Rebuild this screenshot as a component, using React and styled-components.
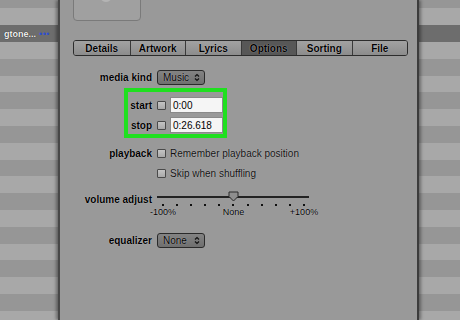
import styled, { createGlobalStyle } from 'styled-components';

const GlobalStyle = createGlobalStyle`
  html, body {
    margin: 0;
    padding: 0;
    background: #999;
  }
  body {
    font-family: "Liberation Sans", Arial, sans-serif;
  }
`;

const Screen = styled.div`
  width: 460px;
  height: 320px;
  overflow: hidden;
  display: grid;
  grid-template-columns: 58px 1fr 41px;
  background: #999;
`;

const ListStrip = styled.div`
  display: flex;
  flex-direction: column;
  margin-top: -8.4px;
  overflow: hidden;
`;

const ListRow = styled.div`
  flex: 0 0 16.8px;
  display: flex;
  align-items: center;
  justify-content: flex-end;
  gap: 3px;
  padding-right: 8px;
  overflow: hidden;
  white-space: nowrap;
  background: ${({ $selected, $odd }) =>
    $selected ? '#6d6d6d' : $odd ? '#a8a8a8' : '#969696'};
`;

const RowText = styled.span`
  font-size: 9px;
  font-weight: bold;
  color: #f2f2f2;
  text-shadow: 0 0 1px #000;
`;

const Dots = styled.span`
  font-size: 9px;
  letter-spacing: 0.5px;
  color: #2f4fd0;
`;

const Dialog = styled.div`
  background: #999;
  border-left: 2px solid #474747;
  border-right: 2px solid #3c3c3c;
  box-shadow: -2px 0 3px rgba(0, 0, 0, 0.35), 2px 0 3px rgba(0, 0, 0, 0.35);
  display: flex;
  flex-direction: column;
  align-items: flex-start;
  padding-left: 13px;
  position: relative;
  z-index: 1;
`;

const Artwork = styled.div`
  margin-top: -10px;
  width: 66px;
  height: 29px;
  border: 1px solid #7a7a7a;
  border-radius: 4px;
  background: #a0a0a0;
  display: flex;
  justify-content: center;
`;

const TabBar = styled.div`
  margin-top: 19px;
  width: 333px;
  height: 14px;
  display: grid;
  grid-template-columns: repeat(6, 1fr);
  border: 1px solid #2c2c2c;
  border-radius: 3px;
  overflow: hidden;
`;

const Tab = styled.div`
  display: flex;
  align-items: center;
  justify-content: center;
  font-size: 10px;
  font-weight: bold;
  color: #000;
  text-shadow: 0 0 1px rgba(255, 255, 255, 0.7);
  background: ${({ $active }) =>
    $active ? '#575757' : 'linear-gradient(#a2a2a2, #8c8c8c)'};
  & + & {
    border-left: 1px solid #3a3a3a;
  }
`;

const Form = styled.div`
  display: flex;
  flex-direction: column;
  margin-left: -13px;
  margin-top: 14px;
`;

const Row = styled.div`
  display: grid;
  grid-template-columns: ${({ $label }) => $label}px auto;
  column-gap: 5px;
  align-items: ${({ $top }) => ($top ? 'start' : 'center')};
  height: ${({ $h }) => $h}px;
  margin-top: ${({ $mt }) => $mt || 0}px;
`;

const Label = styled.div`
  text-align: right;
  font-size: 10px;
  font-weight: bold;
  color: #000;
  white-space: nowrap;
  text-shadow: 0 0 1px rgba(255, 255, 255, 0.6);
  margin-top: ${({ $mt }) => $mt || 0}px;
`;

const Control = styled.div`
  display: flex;
  align-items: center;
  gap: 4px;
  font-size: 10px;
  color: #111;
  white-space: nowrap;
  text-shadow: 0 0 1px rgba(255, 255, 255, 0.5);
`;

const Select = styled.div`
  width: 48px;
  height: 15px;
  box-sizing: border-box;
  border: 1px solid #2a2a2a;
  border-radius: 3px;
  background: linear-gradient(#838383, #6f6f6f);
  display: flex;
  align-items: center;
  justify-content: space-between;
  padding: 0 4px 0 5px;
  font-size: 10px;
  color: #000;
  text-shadow: 0 0 1px rgba(255, 255, 255, 0.6);
`;

const Highlight = styled.div`
  margin-top: 3px;
  margin-left: 64px;
  width: 103px;
  height: 50px;
  box-sizing: border-box;
  border: 4px solid #1fe01f;
  padding: 5px 2px 1px 0;
  display: flex;
  flex-direction: column;
  gap: 4px;
`;

const Check = styled.span`
  width: 9px;
  height: 9px;
  box-sizing: border-box;
  border: 1px solid #4a4a4a;
  border-radius: 1px;
  background: linear-gradient(#c4c4c4, #a9a9a9);
  flex: 0 0 auto;
`;

const TimeInput = styled.div`
  width: 53px;
  height: 16px;
  box-sizing: border-box;
  border: 1px solid #8a8a8a;
  background: #f5f5f5;
  padding-left: 2px;
  display: flex;
  align-items: center;
  font-size: 10px;
  color: #000;
`;

const Slider = styled.div`
  width: 152px;
  display: flex;
  flex-direction: column;
`;

const TrackWrap = styled.div`
  height: 11px;
  position: relative;
`;

const Track = styled.div`
  position: absolute;
  left: 0;
  right: 0;
  top: 5px;
  height: 2px;
  background: #222;
`;

const Thumb = styled.svg`
  position: absolute;
  left: 71px;
  top: 0;
`;

const Ticks = styled.div`
  display: flex;
  justify-content: space-between;
  padding: 0 4px 0 5px;
  margin-top: 2px;
`;

const Tick = styled.span`
  width: 2px;
  height: 2px;
  background: #111;
`;

const ScaleLabels = styled.div`
  display: flex;
  justify-content: space-between;
  padding: 0 4px 0 5px;
  margin-top: 1px;
  height: 10px;
`;

const ScaleMark = styled.span`
  width: 2px;
  display: flex;
  justify-content: center;
  font-size: 9px;
  color: #000;
  white-space: nowrap;
  text-shadow: 0 0 1px rgba(255, 255, 255, 0.6);
`;

const Arrows = () => (
  <svg width="6" height="9" viewBox="0 0 6 9">
    <path d="M1 3.5 L3 1.5 L5 3.5 M1 5.5 L3 7.5 L5 5.5" fill="none" stroke="#111" strokeWidth="1.2" />
  </svg>
);

const ListColumn = ({ text }) => (
  <ListStrip>
    {Array.from({ length: 21 }, (_, i) => (
      <ListRow key={i} $selected={i === 2} $odd={i % 2 === 1}>
        {i === 2 && text && (
          <>
            <RowText>{text}</RowText>
            <Dots>•••</Dots>
          </>
        )}
      </ListRow>
    ))}
  </ListStrip>
);

const tabs = ['Details', 'Artwork', 'Lyrics', 'Options', 'Sorting', 'File'];

const App = () => {
  return (
    <>
      <GlobalStyle />
      <Screen>
        <ListColumn text="gtone..." />
        <Dialog>
          <Artwork>
            <svg width="14" height="13" viewBox="0 0 14 13">
              <ellipse cx="6" cy="7" rx="5" ry="4" fill="#b4b4b4" />
            </svg>
          </Artwork>
          <TabBar>
            {tabs.map((t) => (
              <Tab key={t} $active={t === 'Options'}>{t}</Tab>
            ))}
          </TabBar>
          <Form>
            <Row $label={92} $h={15}>
              <Label>media kind</Label>
              <Select>
                <span>Music</span>
                <Arrows />
              </Select>
            </Row>
            <Highlight>
              <Row $label={24} $h={16}>
                <Label>start</Label>
                <Control>
                  <Check />
                  <TimeInput>0:00</TimeInput>
                </Control>
              </Row>
              <Row $label={24} $h={16}>
                <Label>stop</Label>
                <Control>
                  <Check />
                  <TimeInput>0:26.618</TimeInput>
                </Control>
              </Row>
            </Highlight>
            <Row $label={92} $h={14} $mt={8}>
              <Label>playback</Label>
              <Control>
                <Check />
                Remember playback position
              </Control>
            </Row>
            <Row $label={92} $h={14} $mt={6}>
              <Label />
              <Control>
                <Check />
                Skip when shuffling
              </Control>
            </Row>
            <Row $label={92} $h={26} $mt={11} $top>
              <Label $mt={3}>volume adjust</Label>
              <Slider>
                <TrackWrap>
                  <Track />
                  <Thumb width="11" height="11" viewBox="0 0 11 11">
                    <path d="M1 1 H10 V5.5 L5.5 10 L1 5.5 Z" fill="#8e8e8e" stroke="#2a2a2a" strokeWidth="1" />
                  </Thumb>
                </TrackWrap>
                <Ticks>
                  {Array.from({ length: 11 }, (_, i) => (
                    <Tick key={i} />
                  ))}
                </Ticks>
                <ScaleLabels>
                  <ScaleMark>-100%</ScaleMark>
                  <ScaleMark>None</ScaleMark>
                  <ScaleMark>+100%</ScaleMark>
                </ScaleLabels>
              </Slider>
            </Row>
            <Row $label={92} $h={15} $mt={16}>
              <Label>equalizer</Label>
              <Select>
                <span>None</span>
                <Arrows />
              </Select>
            </Row>
          </Form>
        </Dialog>
        <ListColumn />
      </Screen>
    </>
  );
};

export default App;
